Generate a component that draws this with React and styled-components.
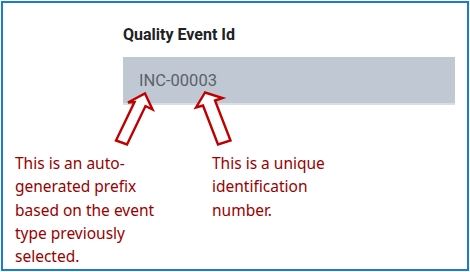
import React from 'react'
import styled, { createGlobalStyle } from 'styled-components'

const GlobalStyle = createGlobalStyle`
  html, body {
    margin: 0;
    padding: 0;
    background: #ffffff;
  }
`

const Frame = styled.div`
  position: relative;
  box-sizing: border-box;
  width: 468px;
  height: 270px;
  margin: 1px;
  border: 2px solid #1b7bd4;
  background: #ffffff;
  display: flex;
  flex-direction: column;
`

const FieldBlock = styled.div`
  padding: 22px 12px 0 120px;
  display: flex;
  flex-direction: column;
`

const Label = styled.div`
  font-family: Roboto, 'Liberation Sans', sans-serif;
  font-weight: 700;
  font-size: 16px;
  line-height: 19px;
  color: #202124;
  margin-bottom: 13px;
`

const ValueBox = styled.div`
  height: 46px;
  background: #c0c9d3;
  border-bottom: 2px solid #d8dee4;
  display: flex;
  align-items: center;
  padding-left: 16px;
  font-family: Roboto, 'Liberation Sans', sans-serif;
  font-size: 16.5px;
  color: #5b6169;
`

const Notes = styled.div`
  display: flex;
  padding: 47px 0 0 12px;
`

const Note = styled.div`
  width: ${props => props.width}px;
  font-family: 'Noto Sans', 'Open Sans', sans-serif;
  font-size: 15.5px;
  line-height: 23.3px;
  color: #990000;
  white-space: pre-line;
`

const Overlay = styled.svg`
  position: absolute;
  top: -3px;
  left: -3px;
  pointer-events: none;
`

const Arrow = ({ points }) => (
  <polygon
    points={points}
    fill="#ffffff"
    stroke="#c00000"
    strokeWidth="2.4"
    strokeLinejoin="miter"
  />
)

export default function App() {
  return (
    <>
      <GlobalStyle />
      <Frame>
        <FieldBlock>
          <Label>Quality Event Id</Label>
          <ValueBox>INC-00003</ValueBox>
        </FieldBlock>
        <Notes>
          <Note width={197}>
            {'This is an auto-\ngenerated prefix\nbased on the event\ntype previously\nselected.'}
          </Note>
          <Note width={200}>
            {'This is a unique\nidentification\nnumber.'}
          </Note>
        </Notes>
        <Overlay width="470" height="272" viewBox="0 0 470 272">
          <Arrow points="145,93.5 152.5,109.5 145.5,106 127,144.5 116,140.5 134.5,102 128,102.5" />
          <Arrow points="205,92.5 196,107.5 203,105.5 218,144.5 230.5,140.5 215,100.5 222.5,98" />
        </Overlay>
      </Frame>
    </>
  )
}
